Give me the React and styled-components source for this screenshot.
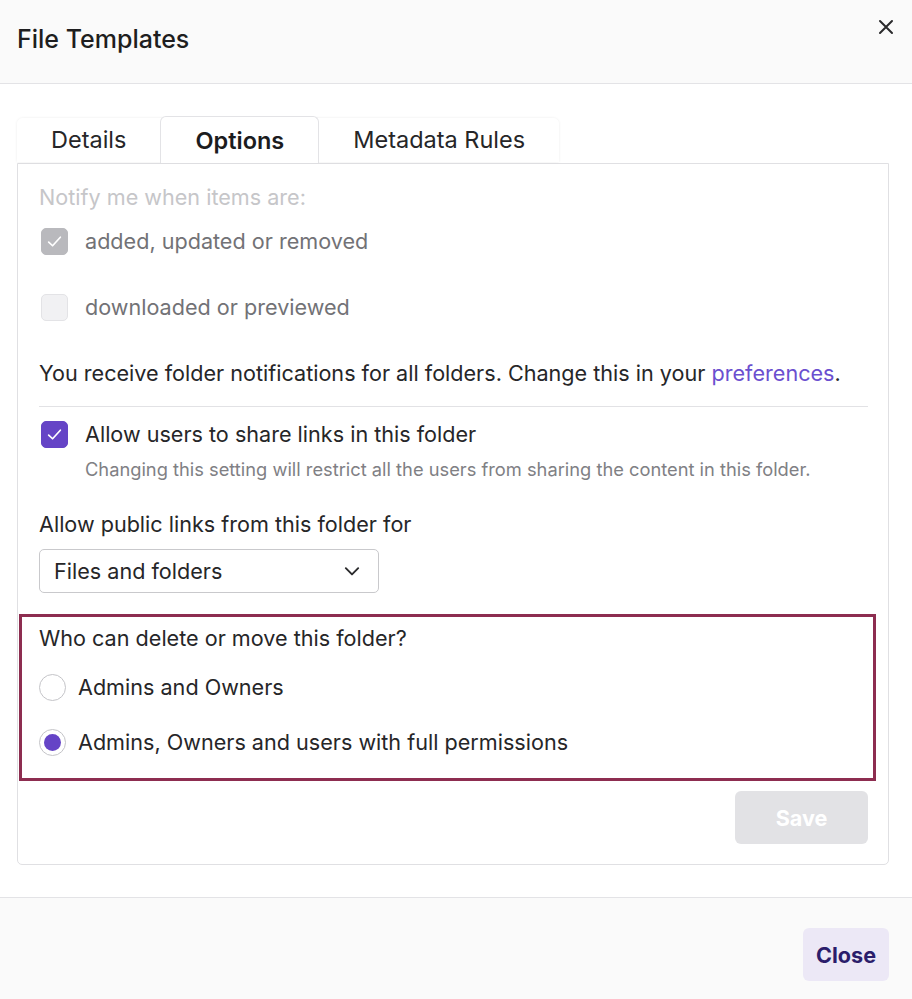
import styled, { createGlobalStyle } from 'styled-components';

const Global = createGlobalStyle`
    html, body {
        margin: 0;
        padding: 0;
        background: #ffffff;
        font-family: Inter, "Noto Sans", "Liberation Sans", sans-serif;
        color: #262628;
    }
    * { box-sizing: border-box; }
`

const Modal = styled.div`
    width: 912px;
    height: 999px;
    display: flex;
    flex-direction: column;
    background: #ffffff;
`

const Header = styled.div`
    height: 84px;
    flex-shrink: 0;
    display: flex;
    align-items: flex-start;
    justify-content: space-between;
    padding: 25px 17px 0 17px;
    background: #fafafa;
    border-bottom: 1px solid #e3e3e6;
`

const Title = styled.h1`
    margin: 0;
    font-size: 25px;
    line-height: 28px;
    font-weight: 500;
    color: #1e1e20;
`

const CloseX = styled.button`
    border: 0;
    background: transparent;
    padding: 0;
    width: 18px;
    height: 18px;
    margin-top: -7px;
    display: flex;
    align-items: center;
    justify-content: center;
    cursor: pointer;
`

const Body = styled.div`
    flex: 1;
    padding: 32px 23px 32px 17px;
`

const TabRow = styled.div`
    display: flex;
    align-items: flex-end;
    height: 47px;
    position: relative;
    z-index: 1;
`

const TabStrip = styled.div`
    display: flex;
    align-items: flex-end;
    background: #ffffff;
    border-radius: 6px 6px 0 0;
    box-shadow: 0 0 3px rgba(0, 0, 0, 0.08);
    height: 44px;
    margin-bottom: 1px;
`

const Tab = styled.div`
    padding: 0 34px;
    height: ${p => (p.$active ? '47px' : '44px')};
    margin-bottom: ${p => (p.$active ? '-1px' : '0')};
    display: flex;
    align-items: center;
    font-size: 23.5px;
    font-weight: ${p => (p.$active ? 600 : 400)};
    color: ${p => (p.$active ? '#1c1c1e' : '#262628')};
    background: #ffffff;
    border: ${p => (p.$active ? '1px solid #e3e3e6' : '0')};
    border-bottom: 0;
    border-radius: 6px 6px 0 0;
    padding-top: ${p => (p.$active ? '2px' : '0')};
    padding-bottom: 2px;
`

const Panel = styled.div`
    border: 1px solid #e0e0e3;
    border-radius: 0 0 5px 5px;
    padding: 19px 20px 20px 21px;
    display: flex;
    flex-direction: column;
`

const Muted = styled.div`
    font-size: 21.6px;
    line-height: 28px;
    color: #c6c6c9;
`

const CheckRow = styled.label`
    display: flex;
    align-items: center;
    gap: 17px;
    height: 28px;
    margin-top: ${p => p.$mt}px;
    padding-left: 2px;
    font-size: 21.6px;
    color: ${p => (p.$disabled ? '#727276' : '#262628')};
`

const Box = styled.span`
    width: 27px;
    height: 27px;
    border-radius: 5px;
    flex-shrink: 0;
    display: flex;
    align-items: center;
    justify-content: center;
    background: ${p => p.$bg};
    border: 1px solid ${p => p.$border};
`

const Text = styled.div`
    font-size: 21.6px;
    line-height: 28px;
    margin-top: ${p => p.$mt || 0}px;
    color: #262628;
`

const Link = styled.a`
    color: #6b4fcf;
    text-decoration: none;
`

const Divider = styled.hr`
    border: 0;
    border-top: 1px solid #e2e2e5;
    margin: 19px 0 0 0;
`

const Helper = styled.div`
    font-size: 18.3px;
    line-height: 24px;
    color: #808084;
    margin-top: 9px;
    padding-left: 46px;
`

const Select = styled.div`
    margin-top: 11px;
    width: 340px;
    height: 44px;
    border: 1px solid #c9c9cc;
    border-radius: 5px;
    display: flex;
    align-items: center;
    justify-content: space-between;
    padding: 0 17px 0 14px;
    font-size: 21.6px;
    color: #262628;
`

const Highlight = styled.div`
    margin: 21px -8px 0 -20px;
    border: 3px solid #8d2d50;
    padding: 7px 17px 22px 17px;
    display: flex;
    flex-direction: column;
`

const RadioRow = styled.label`
    display: flex;
    align-items: center;
    gap: 12px;
    height: 28px;
    margin-top: ${p => p.$mt}px;
    font-size: 21.6px;
    color: #262628;
`

const Radio = styled.span`
    width: 27px;
    height: 27px;
    border-radius: 50%;
    border: 1.5px solid #c4c4c8;
    background: #ffffff;
    flex-shrink: 0;
    display: flex;
    align-items: center;
    justify-content: center;
    &::after {
        content: '';
        width: 17px;
        height: 17px;
        border-radius: 50%;
        background: ${p => (p.$checked ? '#6544c6' : 'transparent')};
    }
`

const Actions = styled.div`
    display: flex;
    justify-content: flex-end;
    margin-top: 10px;
`

const SaveBtn = styled.button`
    width: 133px;
    height: 53px;
    border: 0;
    border-radius: 6px;
    background: #e2e2e5;
    color: #ffffff;
    font-family: inherit;
    font-size: 21.6px;
    font-weight: 700;
`

const Footer = styled.div`
    flex-shrink: 0;
    height: 102px;
    background: #fafafa;
    border-top: 1px solid #e3e3e6;
    display: flex;
    justify-content: flex-end;
    align-items: flex-start;
    padding: 30px 23px 0 0;
`

const CloseBtn = styled.button`
    width: 86px;
    height: 53px;
    border: 0;
    border-radius: 6px;
    background: #ece8f6;
    color: #2b1d6b;
    font-family: inherit;
    font-size: 21.6px;
    font-weight: 700;
`

const Tick = ({ color }) => (
    <svg width="17" height="17" viewBox="0 0 16 16" fill="none">
        <path d="M2.5 8.5 L6.2 12 L13.5 4" stroke={color} strokeWidth="1.6" strokeLinecap="round" strokeLinejoin="round" />
    </svg>
)

const App = () => {
    return (
        <Modal>
            <Global />
            <Header>
                <Title>File Templates</Title>
                <CloseX aria-label="close">
                    <svg width="16" height="16" viewBox="0 0 16 16">
                        <path d="M2 2 L14 14 M14 2 L2 14" stroke="#2a2a2c" strokeWidth="2" strokeLinecap="round" />
                    </svg>
                </CloseX>
            </Header>
            <Body>
                <TabRow>
                    <TabStrip>
                        <Tab>Details</Tab>
                        <Tab $active>Options</Tab>
                        <Tab>Metadata Rules</Tab>
                    </TabStrip>
                </TabRow>
                <Panel>
                    <Muted>Notify me when items are:</Muted>
                    <CheckRow $mt={16} $disabled>
                        <Box $bg="#b9b9bd" $border="#b9b9bd"><Tick color="#ffffff" /></Box>
                        added, updated or removed
                    </CheckRow>
                    <CheckRow $mt={38} $disabled>
                        <Box $bg="#f1f1f3" $border="#e3e3e6" />
                        downloaded or previewed
                    </CheckRow>
                    <Text $mt={38}>
                        You receive folder notifications for all folders. Change this in your <Link href="#">preferences</Link>.
                    </Text>
                    <Divider />
                    <CheckRow $mt={13}>
                        <Box $bg="#6544c6" $border="#6544c6"><Tick color="#ffffff" /></Box>
                        Allow users to share links in this folder
                    </CheckRow>
                    <Helper>Changing this setting will restrict all the users from sharing the content in this folder.</Helper>
                    <Text $mt={29}>Allow public links from this folder for</Text>
                    <Select>
                        Files and folders
                        <svg width="18" height="18" viewBox="0 0 16 16" fill="none">
                            <path d="M2.5 5.5 L8 11 L13.5 5.5" stroke="#2a2a2c" strokeWidth="1.7" strokeLinecap="round" strokeLinejoin="round" />
                        </svg>
                    </Select>
                    <Highlight>
                        <Text>Who can delete or move this folder?</Text>
                        <RadioRow $mt={21}>
                            <Radio />
                            Admins and Owners
                        </RadioRow>
                        <RadioRow $mt={27}>
                            <Radio $checked />
                            Admins, Owners and users with full permissions
                        </RadioRow>
                    </Highlight>
                    <Actions>
                        <SaveBtn disabled>Save</SaveBtn>
                    </Actions>
                </Panel>
            </Body>
            <Footer>
                <CloseBtn>Close</CloseBtn>
            </Footer>
        </Modal>
    );
}

export default App;
